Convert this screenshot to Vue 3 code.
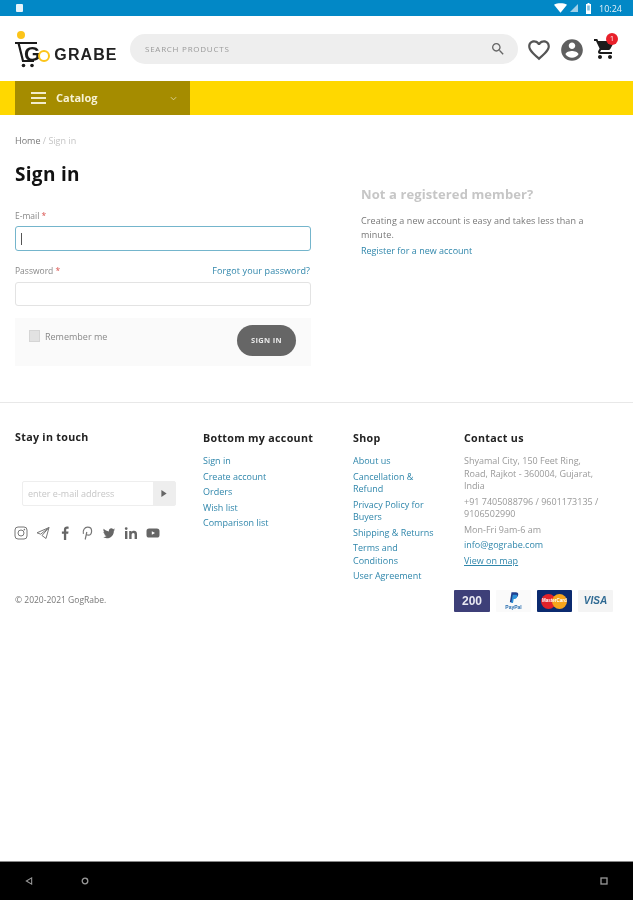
<script setup>
const account = ['Sign in', 'Create account', 'Orders', 'Wish list', 'Comparison list']
const shop = ['About us', 'Cancellation & Refund', 'Privacy Policy for Buyers', 'Shipping & Returns', 'Terms and Conditions', 'User Agreement']
</script>

<template>
  <div class="page">
    <div class="status">
      <span class="note"></span>
      <span class="grow"></span>
      <svg class="wifi" viewBox="0 0 14 10"><path d="M0 1.5C4-.5 10-.5 14 1.5L7 10z" fill="#fff"/></svg>
      <svg class="signal" viewBox="0 0 8 8"><path d="M0 8 8 0v8z" fill="#9fd0e8"/></svg>
      <svg class="battery" viewBox="0 0 5 11"><path d="M1.5 0h2v1H5v10H0V1h1.500z" fill="#fff"/><rect x="1.200" y="2.500" width="2.600" height="5" fill="#7fbfdf"/></svg>
      <span class="time">10:24</span>
    </div>

    <header class="head">
      <div class="logo">
        <svg class="cart-logo" viewBox="0 0 24 37">
          <circle cx="6" cy="4" r="4" fill="#fcc419"/>
          <path d="M0 12h22M3.500 12l4.500 18h11" fill="none" stroke="#1b1b1b" stroke-width="2.200"/>
          <circle cx="8.500" cy="34.500" r="1.800" fill="#1b1b1b"/>
          <circle cx="17" cy="34.500" r="1.800" fill="#1b1b1b"/>
        </svg>
        <span class="logo-g">G</span>
        <span class="logo-o"></span>
        <span class="logo-word">GRABE</span>
      </div>
      <div class="search">
        <span>SEARCH PRODUCTS</span>
        <svg class="ico-search" viewBox="0 0 24 24"><path fill="#666" d="M15.500 14h-.79l-.28-.27C15.410 12.590 16 11.110 16 9.500 16 5.910 13.090 3 9.500 3S3 5.910 3 9.500 5.910 16 9.500 16c1.610 0 3.090-.59 4.230-1.570l.27.28v.79l5 4.990L20.490 19l-4.990-5zm-6 0C7.010 14 5 11.990 5 9.500S7.010 5 9.500 5 14 7.010 14 9.500 11.990 14 9.500 14z"/></svg>
      </div>
      <svg class="ico-heart" viewBox="0 0 24 24"><path fill="#555" d="M16.500 3c-1.740 0-3.410.81-4.500 2.090C10.910 3.810 9.240 3 7.500 3 4.420 3 2 5.420 2 8.500c0 3.780 3.400 6.860 8.550 11.540L12 21.350l1.450-1.320C18.600 15.360 22 12.280 22 8.500 22 5.420 19.580 3 16.500 3zm-4.400 15.550l-.1.100-.1-.1C7.140 14.240 4 11.390 4 8.500 4 6.500 5.500 5 7.500 5c1.540 0 3.040.99 3.570 2.360h1.870C13.460 5.990 14.960 5 16.500 5c2 0 3.500 1.500 3.500 3.500 0 2.890-3.140 5.740-7.900 10.050z"/></svg>
      <svg class="ico-user" viewBox="0 0 24 24"><path fill="#5f5f5f" d="M12 2C6.480 2 2 6.480 2 12s4.480 10 10 10 10-4.480 10-10S17.520 2 12 2zm0 3c1.660 0 3 1.340 3 3s-1.340 3-3 3-3-1.340-3-3 1.340-3 3-3zm0 14.200c-2.500 0-4.710-1.280-6-3.220.03-1.990 4-3.080 6-3.080 1.990 0 5.970 1.090 6 3.080-1.290 1.940-3.500 3.220-6 3.220z"/></svg>
      <div class="cart">
        <svg viewBox="0 0 24 24"><path fill="#1c1c1c" d="M7 18c-1.100 0-1.990.9-1.990 2S5.900 22 7 22s2-.9 2-2-.9-2-2-2zM1 2v2h2l3.600 7.590-1.350 2.450c-.16.280-.25.610-.25.960 0 1.100.9 2 2 2h12v-2H7.420c-.14 0-.25-.11-.25-.25l.03-.12.9-1.630h7.450c.75 0 1.410-.41 1.750-1.030l3.580-6.490c.08-.14.120-.31.120-.48 0-.55-.45-1-1-1H5.210l-.94-2H1zm16 16c-1.100 0-1.990.9-1.990 2s.89 2 1.990 2 2-.9 2-2-.9-2-2-2z"/></svg>
        <span class="badge">1</span>
      </div>
    </header>

    <nav class="nav">
      <div class="catalog">
        <span class="burger"><i></i><i></i><i></i></span>
        <span class="catalog-label">Catalog</span>
        <svg class="chev" viewBox="0 0 8 5"><path d="M1 1l3 3 3-3" fill="none" stroke="#e0d9a8" stroke-width="1"/></svg>
      </div>
    </nav>

    <main class="main">
      <div class="crumbs"><span class="c-home">Home</span><span class="c-rest"> / Sign in</span></div>
      <div class="cols">
        <section class="left">
          <h1>Sign in</h1>
          <div class="label first"><span>E-mail <b>*</b></span></div>
          <div class="input focused"><i class="caret"></i></div>
          <div class="label second"><span>Password <b>*</b></span><a>Forgot your password?</a></div>
          <div class="input plain"></div>
          <div class="actions">
            <label class="remember"><span class="check"></span>Remember me</label>
            <span class="btn">SIGN IN</span>
          </div>
        </section>
        <section class="right">
          <h2>Not a registered member?</h2>
          <p>Creating a new account is easy and takes less than a minute.</p>
          <a>Register for a new account</a>
        </section>
      </div>
    </main>

    <footer class="foot">
      <div class="foot-cols">
        <div class="f-touch">
          <h3 class="touch-title">Stay in touch</h3>
          <div class="news">
            <span class="news-in">enter e-mail address</span>
            <span class="news-btn"><svg viewBox="0 0 6 8"><path d="M0 0l6 4-6 4z" fill="#666"/></svg></span>
          </div>
          <div class="social">
            <svg viewBox="0 0 14 14"><rect x="1" y="1" width="12" height="12" rx="3" fill="none" stroke="#777" stroke-width="1"/><circle cx="7" cy="7" r="3" fill="none" stroke="#777" stroke-width="1"/><circle cx="10.400" cy="3.600" r=".8" fill="#777"/></svg>
            <svg viewBox="0 0 14 14"><path d="M13 1.500 1 6.800l3.700 1.400L13 1.500 6 9.500l4 3z" fill="none" stroke="#777" stroke-width="1" stroke-linejoin="round"/></svg>
            <svg viewBox="0 0 14 14"><path d="M8.200 14V7.800h2l.3-2.400H8.200V4c0-.7.2-1.200 1.200-1.200h1.200V.7C10.400.6 9.700.6 9 .6 7.200.6 5.900 1.700 5.900 3.700v1.700h-2v2.400h2V14z" fill="#666"/></svg>
            <svg viewBox="0 0 14 14"><path d="M5.200 13.500 6.800 6M3.400 7.800C2.400 4.500 4.600 1.200 7.600 1.200c2.600 0 4 1.800 4 3.700 0 2.400-1.400 4.200-3.300 4.200-1 0-1.800-.5-2-1.300" fill="none" stroke="#777" stroke-width="1.200"/></svg>
            <svg viewBox="0 0 24 24"><path fill="#666" d="M22.460 6c-.77.350-1.600.58-2.460.69.880-.53 1.560-1.370 1.880-2.380-.83.500-1.750.85-2.720 1.050C18.370 4.500 17.260 4 16 4c-2.350 0-4.270 1.920-4.270 4.290 0 .34.040.67.110.98C8.280 9.090 5.110 7.380 3 4.790c-.37.630-.58 1.370-.58 2.150 0 1.490.75 2.810 1.910 3.560-.71 0-1.370-.2-1.950-.5v.03c0 2.080 1.480 3.820 3.440 4.210-.36.100-.74.150-1.130.15-.27 0-.54-.03-.8-.08.540 1.690 2.110 2.950 4 2.980-1.460 1.160-3.310 1.840-5.330 1.840-.34 0-.68-.02-1.020-.06C3.440 20.290 5.700 21 8.120 21 16 21 20.330 14.460 20.330 8.790c0-.19 0-.37-.01-.56.840-.6 1.560-1.360 2.140-2.230z"/></svg>
            <svg viewBox="0 0 14 14"><path fill="#666" d="M1 5h2.400v8H1zM2.200 1.200a1.400 1.400 0 1 1 0 2.800 1.400 1.400 0 0 1 0-2.800zM5.200 5h2.300v1.100C8 5.300 8.900 4.800 10 4.800c2.200 0 3 1.400 3 3.500V13h-2.400V8.800c0-1-.3-1.800-1.300-1.800-1.100 0-1.700.8-1.700 1.900V13H5.200z"/></svg>
            <svg viewBox="0 0 14 14"><rect x=".5" y="2.500" width="13" height="9" rx="2.600" fill="#666"/><path d="M5.800 5.200v3.600L9 7z" fill="#fff"/></svg>
          </div>
        </div>
        <div class="f-acc">
          <h3>Bottom my account</h3>
          <a v-for="t in account" :key="t">{{ t }}</a>
        </div>
        <div class="f-shop">
          <h3>Shop</h3>
          <a v-for="t in shop" :key="t">{{ t }}</a>
        </div>
        <div class="f-contact">
          <h3>Contact us</h3>
          <p>Shyamal City, 150 Feet Ring, Road, Rajkot - 360004, Gujarat, India</p>
          <p>+91 7405088796 / 9601173135 / 9106502990</p>
          <p>Mon-Fri 9am-6 am</p>
          <a>info@gograbe.com</a>
          <a class="under">View on map</a>
        </div>
      </div>
      <div class="foot-base">
        <span class="copy">© 2020-2021 GogRabe.</span>
        <div class="cards">
          <span class="pay p200">200</span>
          <span class="pay ppal">
            <svg viewBox="0 0 12 14"><path d="M3 0h5c2.500 0 3.500 1.500 3 3.500C10.500 6 9 7 6.500 7H5l-1 5H1z" fill="#1f3f8f"/><path d="M4.500 3h4.800c1.300 1.500.4 5-3 5.200H5.600L4.800 13H2.600z" fill="#2b8fd6"/></svg>
            <small>PayPal</small>
          </span>
          <span class="pay mc">
            <i class="mc-r"></i><i class="mc-o"></i><em>MasterCard</em>
          </span>
          <span class="pay visa">VISA</span>
        </div>
      </div>
    </footer>

    <div class="android">
      <svg viewBox="0 0 8 9"><path d="M7 1v7L1 4.500z" fill="none" stroke="#999" stroke-width="1.200"/></svg>
      <svg class="a-home" viewBox="0 0 8 8"><circle cx="4" cy="4" r="2.800" fill="none" stroke="#999" stroke-width="1.300"/></svg>
      <span class="grow"></span>
      <svg viewBox="0 0 8 8"><rect x="1" y="1" width="6" height="6" fill="none" stroke="#999" stroke-width="1.300"/></svg>
    </div>
  </div>
</template>

<style>
html, body { margin: 0; background: #fff; }
</style>

<style scoped>
.page { display: flex; flex-direction: column; min-height: 900px; width: 633px; font-family: "Open Sans", "Liberation Sans", sans-serif; font-size: 9px; color: #666; background: #fff; overflow: hidden; filter: blur(.45px); }
.grow { flex: 1; }
h1, h2, h3, p { margin: 0; }
a { color: #2f86ab; display: block; }

.status { height: 16px; background: #0288c6; display: flex; align-items: center; padding: 0 11px 0 16px; }
.note { width: 7px; height: 8px; background: #e6f3fa; border-radius: 1px; }
.wifi { width: 13px; height: 10px; margin-right: 3px; }
.signal { width: 8px; height: 8px; margin-right: 8px; }
.battery { width: 5px; height: 11px; margin-right: 8px; }
.time { color: #e3f1f8; font-size: 9px; }

.head { height: 65px; display: flex; align-items: center; padding-left: 15px; }
.logo { width: 115px; height: 37px; display: flex; align-items: flex-end; margin-top: 2px; }
.cart-logo { width: 24px; height: 37px; flex: none; }
.logo-g { font: 700 21px/21px "Liberation Sans", sans-serif; color: #1b1b1b; margin: 0 -2px 4px -15px; }
.logo-o { width: 8px; height: 8px; border: 2.500px solid #fcc419; border-radius: 50%; margin: 0 4px 6px 0; flex: none; }
.logo-word { font: 700 16px/16px "Liberation Sans", sans-serif; letter-spacing: 1.100px; color: #222; margin-bottom: 5px; }
.search { width: 388px; height: 30px; background: #eee; border-radius: 15px; display: flex; align-items: center; justify-content: space-between; padding: 0 12px 0 15px; box-sizing: border-box; font-size: 8px; letter-spacing: .75px; color: #9a9a9a; }
.ico-search { width: 16px; height: 16px; }
.ico-heart { width: 26px; height: 26px; margin: 2px 0 0 8px; }
.ico-user { width: 26px; height: 26px; margin: 3px 0 0 7px; }
.cart { position: relative; width: 26px; height: 26px; margin: -2px 0 0 8px; }
.cart svg { width: 24px; height: 24px; display: block; margin-top: 2px; }
.badge { position: absolute; top: -2px; left: 13px; width: 12px; height: 12px; border-radius: 50%; background: #e8202a; color: #fff; font-size: 7px; line-height: 12px; text-align: center; }

.nav { height: 34px; background: #ffd800; padding-left: 15px; }
.catalog { width: 175px; height: 34px; background: #a58c00; display: flex; align-items: center; padding: 0 13px 0 16px; box-sizing: border-box; }
.burger { display: flex; flex-direction: column; gap: 3px; width: 15px; }
.burger i { height: 2px; background: #f2eccb; display: block; }
.catalog-label { color: #f7f2d4; font-weight: 700; font-size: 11px; margin: -2px 0 0 10px; flex: 1; }
.chev { width: 7px; height: 5px; }

.main { padding: 0 15px; height: 288px; box-sizing: border-box; border-bottom: 1px solid #e8e8e8; }
.crumbs { padding-top: 19px; line-height: 14px; font-size: 9px; }
.c-home { color: #777; }
.c-rest { color: #c4c4c4; }
.cols { display: flex; }
.left { width: 296px; }
.left h1 { font-size: 19px; letter-spacing: .3px; font-weight: 700; color: #111; line-height: 24px; margin-top: 14px; }
.label { display: flex; justify-content: space-between; line-height: 12px; color: #888; font-size: 8.500px; }
.label b { color: #d9534f; font-weight: 400; }
.label a { font-size: 9px; letter-spacing: .1px; margin-right: 1px; }
.first { margin-top: 24px; margin-bottom: 4px; }
.second { margin-top: 14px; margin-bottom: 5px; }
.input { height: 25px; border: 1px solid #e3e3e3; border-radius: 3px; box-sizing: border-box; display: flex; align-items: center; padding-left: 5px; }
.plain { height: 24px; }
.focused { border: 1.500px solid #74b5cc; }
.caret { width: 1px; height: 12px; background: #555; display: block; }
.actions { height: 48px; margin-top: 12px; background: #fafafa; display: flex; align-items: center; justify-content: space-between; padding: 0 15px 0 14px; }
.remember { display: flex; align-items: center; color: #888; margin-top: -12px; }
.check { width: 9px; height: 10px; background: #e2e2e2; border: 1px solid #d5d5d5; margin-right: 5px; display: block; }
.btn { width: 59px; height: 31px; border-radius: 16px; background: #666; color: #e8e8e8; font-weight: 700; font-size: 7.500px; display: flex; align-items: center; justify-content: center; letter-spacing: .3px; margin-top: -4px; }

.right { margin-left: 50px; width: 240px; padding-top: 37px; }
.right h2 { font-size: 13px; font-weight: 700; color: #c6c6c6; line-height: 18px; margin-bottom: 11px; letter-spacing: .1px; }
.right p { line-height: 14px; color: #777; letter-spacing: .08px; }
.right a { line-height: 14px; margin-top: 2px; }

.foot { padding: 0 20px 0 15px; }
.foot-cols { display: flex; height: 182px; }
.foot-cols h3 { font-size: 10.700px; font-weight: 700; color: #222; line-height: 14px; padding-top: 28px; margin-bottom: 10px; letter-spacing: .3px; }
.foot-cols a { line-height: 12.500px; margin-bottom: 3px; }
.f-touch { width: 188px; flex: none; }
.f-touch .touch-title { padding-top: 27px; margin-bottom: 0; }
.f-acc { width: 150px; flex: none; }
.f-shop { width: 111px; flex: none; padding-right: 25px; box-sizing: border-box; }
.f-contact { width: 135px; flex: none; }
.f-contact p { line-height: 12.500px; color: #999; margin-bottom: 3px; }
.under { text-decoration: underline; }
.news { margin: 37px 0 0 7px; width: 154px; height: 25px; border: 1px solid #eee; border-radius: 2px; display: flex; box-sizing: border-box; }
.news-in { flex: 1; color: #c6c6c6; line-height: 23px; padding-left: 5px; }
.news-btn { width: 22px; background: #eee; display: flex; align-items: center; justify-content: center; }
.news-btn svg { width: 6px; height: 7px; }
.social { display: flex; gap: 8px; margin-top: 20px; margin-left: -1px; }
.social svg { width: 14px; height: 14px; }

.foot-base { display: flex; align-items: flex-start; justify-content: space-between; }
.copy { line-height: 14px; color: #777; font-size: 8.500px; padding-top: 8px; }
.cards { display: flex; gap: 6px; margin-top: 5px; }
.pay { width: 35px; height: 22px; display: flex; align-items: center; justify-content: center; position: relative; box-sizing: border-box; border-radius: 1px; }
.p200 { background: #3d3f78; color: #e9e9f2; font: 700 12px/22px "Liberation Sans", sans-serif; width: 36px; }
.ppal { background: #fafafa; flex-direction: column; }
.ppal svg { width: 10px; height: 12px; }
.ppal small { font: 700 5px/6px "Liberation Sans", sans-serif; color: #2a6fb0; }
.mc { background: #0b2a6f; }
.mc i { position: absolute; width: 15px; height: 15px; border-radius: 50%; top: 3.500px; }
.mc-r { left: 4px; background: #e2232a; }
.mc-o { left: 15px; background: #f6a51c; }
.mc em { position: relative; font: 700 4.500px/6px "Liberation Sans", sans-serif; color: #fff; }
.visa { background: #f4f4f4; color: #2f6a93; font: italic 700 10px/22px "Liberation Sans", sans-serif; }

.android { margin-top: auto; height: 39px; background: #000; border-top: 1px solid #888; box-sizing: border-box; display: flex; align-items: center; padding: 0 25px; }
.android svg { width: 8px; height: 8px; }
.android .a-home { margin-left: 48px; }
</style>
